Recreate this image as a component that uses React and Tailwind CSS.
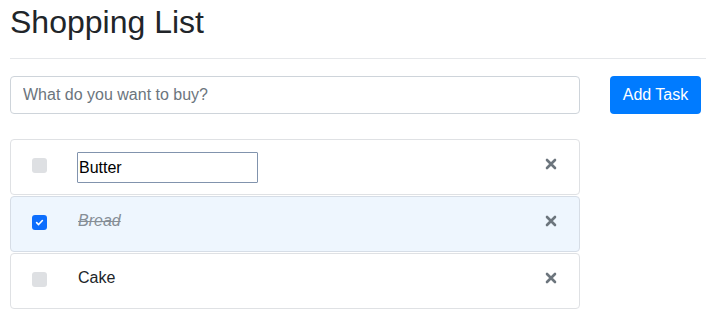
import React, { useState } from "react";

const font = { fontFamily: '"Liberation Sans", Arial, sans-serif' };

function RemoveIcon() {
    return (
        <svg width="12" height="12" viewBox="0 0 12 12" className="text-[#6c757d]">
            <path d="M2 2 L10 10 M10 2 L2 10" stroke="currentColor" strokeWidth="2.6" strokeLinecap="round" />
        </svg>
    );
}

function Checkbox({ checked }) {
    return checked ? (
        <span className="mt-[6px] flex h-[15px] w-[15px] items-center justify-center rounded-[3px] bg-[#0d6efd]">
            <svg width="9" height="9" viewBox="0 0 10 10">
                <path d="M1.8 5.2 L4 7.3 L8.2 2.8" fill="none" stroke="white" strokeWidth="1.8" strokeLinecap="round" strokeLinejoin="round" />
            </svg>
        </span>
    ) : (
        <span className="mt-[6px] block h-[15px] w-[15px] rounded-[3px] bg-[#dee0e3]" />
    );
}

function ListItem({ item, editing }) {
    return (
        <li
            className={`flex h-[56px] items-start rounded-[4px] border pt-[12px] pl-[21px] pr-[16px] mb-px
                ${item.done ? "bg-[#eef6fe] border-[#d6dde6]" : "bg-white border-[#dfe1e4]"}`}
        >
            <Checkbox checked={item.done} />
            <div className="ml-[30px] flex-1">
                {editing ? (
                    <input
                        defaultValue={item.text}
                        className="h-[31px] w-[181px] rounded-[1px] border-[1.5px] border-[#8193ad] px-[1px] text-[16px] text-black outline-none"
                        style={font}
                        autoFocus
                    />
                ) : (
                    <span className={`block text-[16px] leading-[24px] pl-[1px] ${item.done ? "italic line-through text-[#868e96]" : "text-[#212529]"}`}>
                        {item.text}
                    </span>
                )}
            </div>
            <button className="flex h-6 w-6 items-center justify-center">
                <RemoveIcon />
            </button>
        </li>
    );
}

export default function App() {
    const [items] = useState([
        { id: 1, text: "Butter", done: false },
        { id: 2, text: "Bread", done: true },
        { id: 3, text: "Cake", done: false },
    ]);

    return (
        <div className="min-h-screen bg-white pl-[10px] text-[#212529]" style={font}>
            <h1 className="pt-[3px] text-[32px] leading-[38px] font-normal">Shopping List</h1>
            <hr className="mt-[17px] border-t border-[#e5e7ea]" />

            <div className="mt-[17px] flex items-center">
                <input
                    placeholder="What do you want to buy?"
                    className="h-[38px] w-[570px] shrink-0 rounded-[4px] border border-[#ced4da] px-[12px] text-[16px] placeholder:text-[#6c757d] outline-none"
                    style={font}
                />
                <button className="ml-[30px] h-[38px] w-[91px] shrink-0 rounded-[4px] bg-[#007bff] text-[16px] text-white">
                    Add Task
                </button>
            </div>

            <ul className="mt-[25px] w-[570px]">
                {items.map((item) => (
                    <ListItem key={item.id} item={item} editing={item.id === 1} />
                ))}
            </ul>
        </div>
    );
}
